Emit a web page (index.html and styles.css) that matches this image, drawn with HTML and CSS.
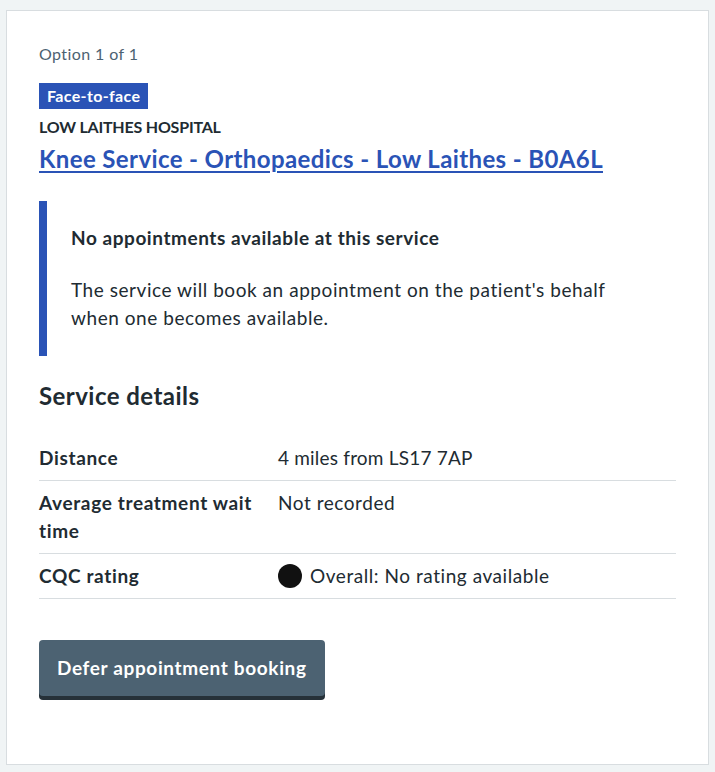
FILE: index.html
```html
<!DOCTYPE html>
<html lang="en">
<head>
<meta charset="utf-8">
<title>Service option</title>
<link rel="stylesheet" href="styles.css">
</head>
<body>
<main class="card">
  <p class="option">Option 1 of 1</p>
  <strong class="tag">Face-to-face</strong>
  <p class="org">LOW LAITHES HOSPITAL</p>
  <h2 class="service"><a href="#">Knee Service - Orthopaedics - Low Laithes - B0A6L</a></h2>
  <div class="inset">
    <h3 class="inset-title">No appointments available at this service</h3>
    <p class="inset-text">The service will book an appointment on the patient's behalf when one becomes available.</p>
  </div>
  <h3 class="details-title">Service details</h3>
  <dl class="summary">
    <div class="summary-row">
      <dt class="summary-key">Distance</dt>
      <dd class="summary-value numeric">4 miles from LS17 7AP</dd>
    </div>
    <div class="summary-row">
      <dt class="summary-key">Average treatment wait time</dt>
      <dd class="summary-value">Not recorded</dd>
    </div>
    <div class="summary-row">
      <dt class="summary-key">CQC rating</dt>
      <dd class="summary-value rating"><span class="dot"></span>Overall: No rating available</dd>
    </div>
  </dl>
  <button class="btn" type="button">Defer appointment booking</button>
</main>
</body>
</html>
```
FILE: styles.css
```css
html, body {
  margin: 0;
  padding: 0;
}
body {
  background: #f0f4f5;
  font-family: "Lato", "Liberation Sans", sans-serif;
  color: #212b32;
  padding-top: 10px;
}
.card {
  display: block;
  margin: 0 6px;
  background: #ffffff;
  border: 1px solid #d8dde0;
  padding: 31px 32px 33px 32px;
}
.option {
  margin: 0;
  font-size: 16px;
  line-height: 24px;
  letter-spacing: 0.4px;
  color: #4c6272;
}
.tag {
  display: inline-block;
  margin-top: 17px;
  background: #2a53b6;
  color: #ffffff;
  font-size: 16px;
  line-height: 24px;
  font-weight: 700;
  letter-spacing: 0.35px;
  padding: 1px 8px;
}
.org {
  margin: 6px 0 0 0;
  font-size: 16px;
  line-height: 24px;
  font-weight: 700;
  letter-spacing: -0.2px;
}
.service {
  margin: 4px 0 0 0;
  font-size: 24px;
  line-height: 32px;
  font-weight: 700;
  letter-spacing: 0.38px;
}
.service a {
  color: #2a53b6;
  text-decoration: underline;
  text-underline-offset: 3px;
  text-decoration-thickness: 2px;
}
.inset {
  margin-top: 26px;
  border-left: 8px solid #2a53b6;
  padding: 23px 24px 24px 24px;
}
.inset-title {
  margin: 0;
  font-size: 19px;
  line-height: 28px;
  font-weight: 700;
  letter-spacing: 0.55px;
}
.inset-text {
  margin: 24px 0 0 0;
  font-size: 19px;
  line-height: 28px;
  letter-spacing: 0.55px;
}
.details-title {
  margin: 24px 0 0 0;
  font-size: 24px;
  line-height: 32px;
  font-weight: 700;
  letter-spacing: 0.45px;
}
.summary {
  margin: 24px 0 0 0;
}
.summary-row {
  display: grid;
  grid-template-columns: 239px 1fr;
  border-bottom: 1px solid #d8dde0;
}
.summary-key,
.summary-value {
  margin: 0;
  padding: 8px 0;
  font-size: 19px;
  line-height: 28px;
  letter-spacing: 0.55px;
}
.summary-value.numeric {
  letter-spacing: 0.2px;
}
.summary-key {
  font-weight: 700;
  letter-spacing: 0.65px;
  padding-right: 20px;
}
.rating {
  display: flex;
  align-items: center;
  gap: 8px;
}
.dot {
  display: inline-block;
  width: 24px;
  height: 24px;
  border-radius: 50%;
  background: #111111;
  flex: none;
}
.btn {
  display: inline-block;
  margin: 41px 0 35px 0;
  background: #4c6272;
  color: #ffffff;
  font-family: inherit;
  font-size: 19px;
  line-height: 28px;
  font-weight: 700;
  letter-spacing: 0.64px;
  border: 0;
  border-radius: 4px;
  padding: 14px 18px;
  box-shadow: 0 4px 0 #263139;
  cursor: pointer;
}
```
